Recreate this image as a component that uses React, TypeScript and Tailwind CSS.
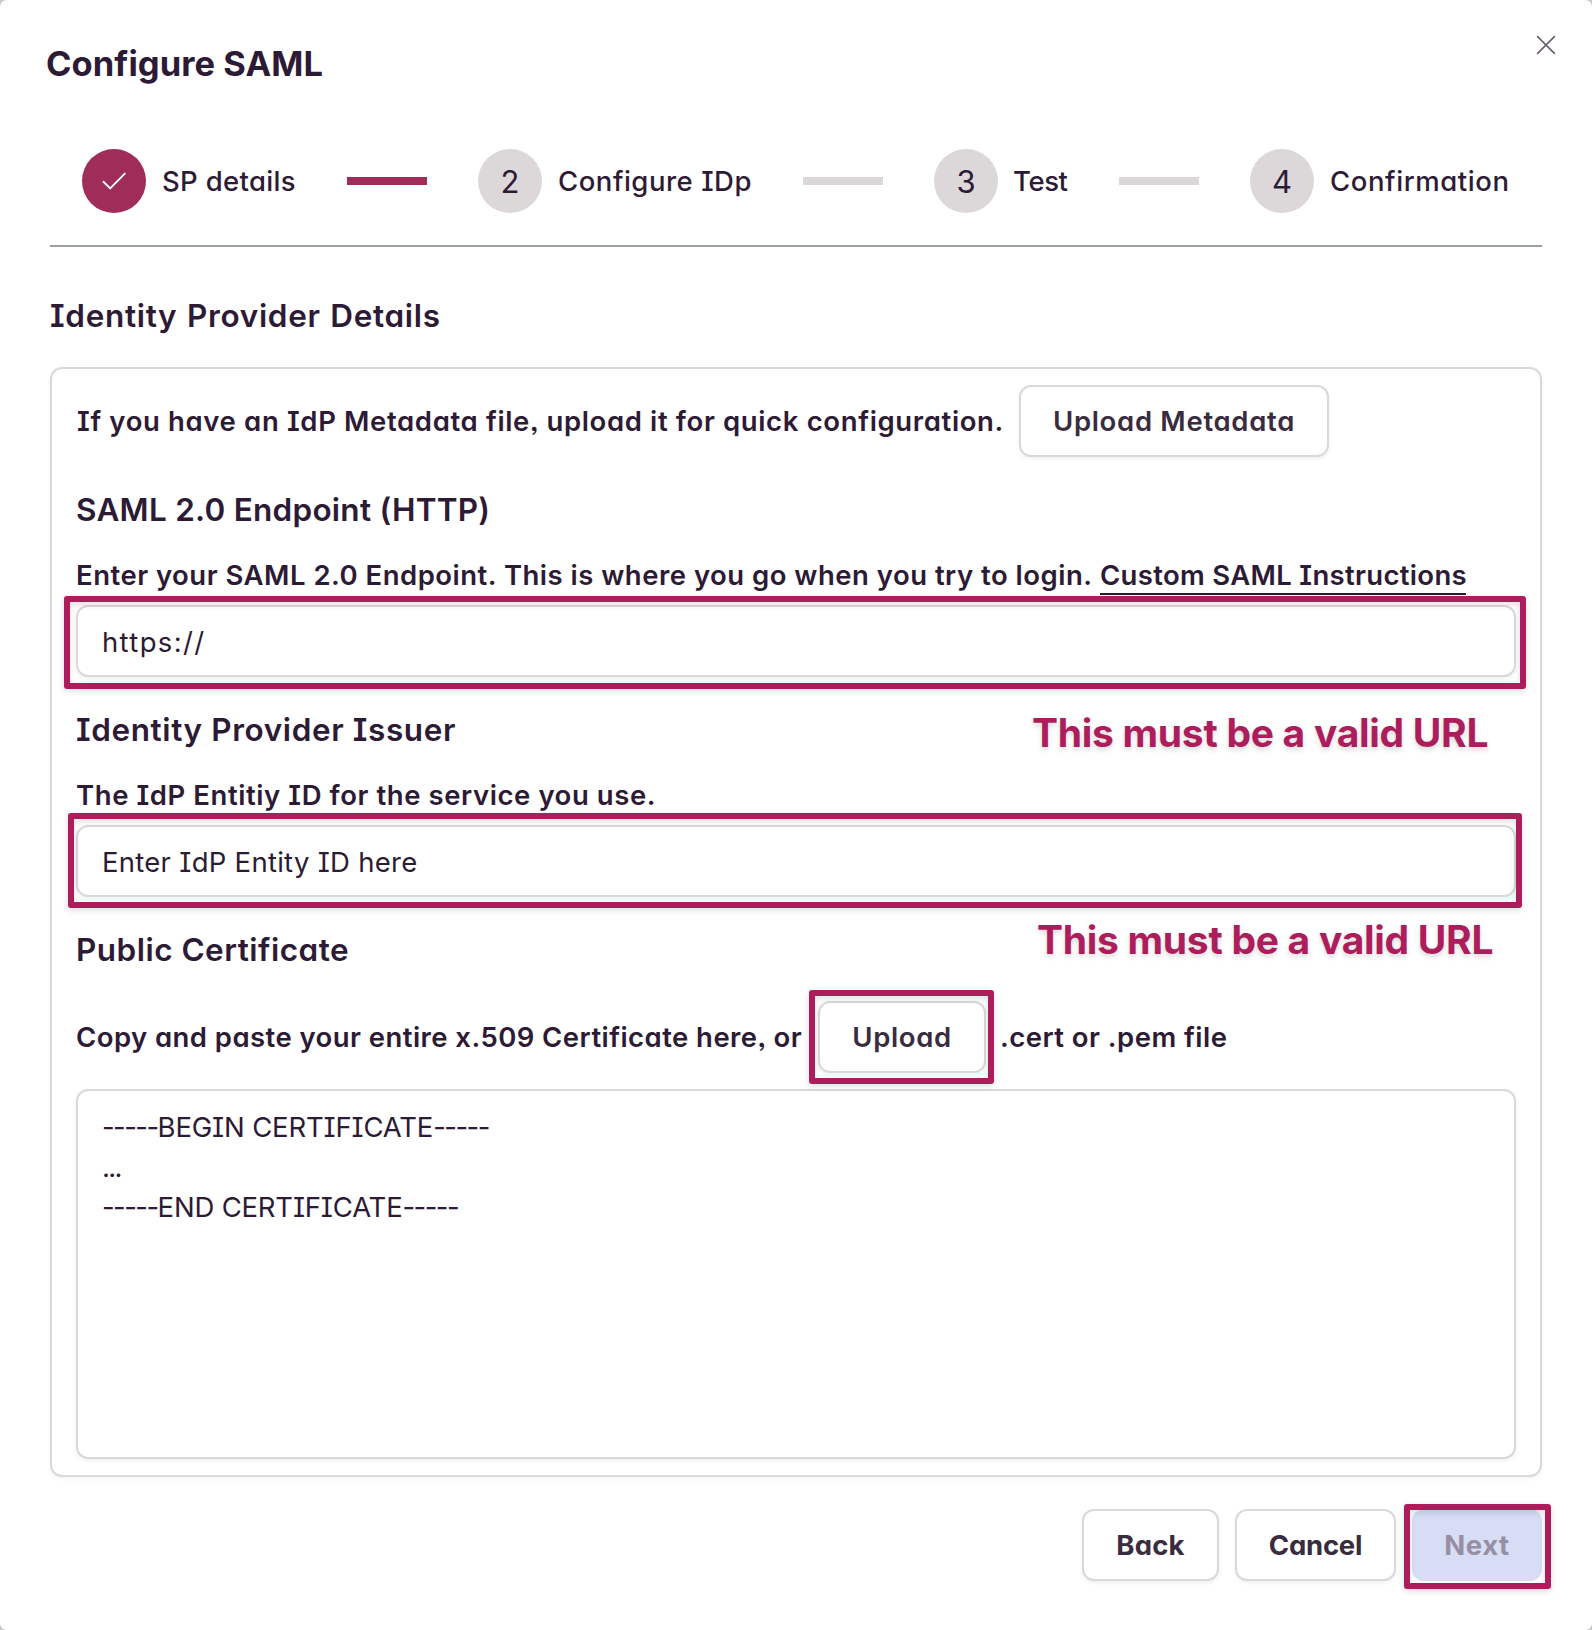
import type { ReactNode } from "react";

const button =
  "flex h-[72px] shrink-0 items-center justify-center rounded-[12px] border-2 border-[#dcd8da] bg-white text-[27.5px] text-[#3a2c3f] shadow-[0_2px_4px_rgba(0,0,0,0.06)]";

const field =
  "flex h-[72px] items-center rounded-[12px] border-2 border-[#dcd8da] px-6 pt-0.5 font-normal shadow-[0_2px_4px_rgba(0,0,0,0.06)]";

function Step({ mark, label, done = false }: { mark: ReactNode; label: ReactNode; done?: boolean }) {
  return (
    <div className="flex shrink-0 items-center">
      <div
        className={
          done
            ? "flex size-16 items-center justify-center rounded-full bg-[#a02c5a] text-white"
            : "flex size-16 items-center justify-center rounded-full bg-[#dcd8da] text-[31px] leading-none"
        }
      >
        {mark}
      </div>
      {label}
    </div>
  );
}

function Connector({ active = false }: { active?: boolean }) {
  return <div className={active ? "h-2 w-20 shrink-0 bg-[#a02c5a]" : "h-2 w-20 shrink-0 bg-[#dcd8da]"} />;
}

function Highlight({ className }: { className: string }) {
  return (
    <div
      className={`pointer-events-none absolute rounded-[3px] border-[6px] border-[#ae1d5b] shadow-[0_2px_6px_rgba(0,0,0,0.14),inset_0_3px_6px_rgba(0,0,0,0.12)] ${className}`}
    />
  );
}

function Note({ className }: { className: string }) {
  return (
    <div
      className={`absolute text-[39px] leading-[48px] font-bold tracking-[-0.28px] whitespace-nowrap text-[#ae1d5b] [font-feature-settings:normal] [text-shadow:0_3px_5px_rgba(0,0,0,0.15)] ${className}`}
    >
      This must be a valid URL
    </div>
  );
}

export default function App() {
  return (
    <div className="bg-[#cbcbcb]">
      <div className="h-[1630px] w-[1592px] overflow-hidden rounded-[7px] bg-white font-['Inter',sans-serif] whitespace-nowrap text-[#2d1b36] [font-feature-settings:'cv11','cv08','ss03']">
        <header className="flex items-start justify-between pr-[36px] pl-[46px]">
          <h1 className="mt-[39px] text-[34.5px] leading-[50px] font-bold tracking-[0.06px]">Configure SAML</h1>
          <button aria-label="Close" className="mt-[35px] text-[#6c6072]">
            <svg width="20" height="20" viewBox="0 0 20 20" fill="none" stroke="currentColor" strokeWidth="1.7" strokeLinecap="round">
              <path d="M1.6 1.6 18.4 18.4M18.4 1.6 1.6 18.4" />
            </svg>
          </button>
        </header>

        <main className="mx-[50px]">
          <div className="mt-[60px] flex h-[98px] items-start border-b-2 border-[#9ca0ae] pl-8">
            <div className="flex h-16 items-center text-[27.5px] leading-10 font-medium">
              <Step
                done
                mark={
                  <svg width="26" height="20" viewBox="0 0 26 20" fill="none" stroke="currentColor" strokeWidth="1.9" strokeLinecap="round" strokeLinejoin="round">
                    <path d="M2.4 10.8 9.2 17.4 23.8 2.6" />
                  </svg>
                }
                label={<span className="ml-4 w-[185px] tracking-[0.32px]">SP details</span>}
              />
              <Connector active />
              <div className="w-[51px]" />
              <Step mark={<span className="font-normal">2</span>} label={<span className="ml-4 w-[245px] tracking-[0.52px]">Configure IDp</span>} />
              <Connector />
              <div className="w-[51px]" />
              <Step mark={<span className="font-normal">3</span>} label={<span className="ml-[15px] w-[106px] tracking-[-0.4px]">Test</span>} />
              <Connector />
              <div className="w-[51px]" />
              <Step mark={<span className="font-normal">4</span>} label={<span className="ml-4 tracking-[0.58px]">Confirmation</span>} />
            </div>
          </div>

          <h2 className="mt-[49px] text-[31.5px] leading-10 font-semibold tracking-[0.68px] [word-spacing:1px]">Identity Provider Details</h2>

          <section className="mt-[31px] h-[1110px] rounded-[12px] border-2 border-[#dcd8da] px-6 pt-4 text-[27.5px] leading-10 font-semibold shadow-[0_2px_4px_rgba(0,0,0,0.05)]">
            <div className="flex items-center">
              <p className="w-[943px] pl-px tracking-[0.64px]">If you have an IdP Metadata file, upload it for quick configuration.</p>
              <button className={`${button} w-[310px] tracking-[0.69px]`}>Upload Metadata</button>
            </div>

            <h3 className="mt-[33px] text-[31.5px] tracking-[0.26px]">SAML 2.0 Endpoint (HTTP)</h3>
            <p className="mt-[25px] flex">
              <span className="w-[1024px] tracking-[0.49px]">Enter your SAML 2.0 Endpoint. This is where you go when you try to login.</span>
              <a className="h-10 w-[366px] border-b-2 border-[#2d1b36] tracking-[0.32px]">Custom SAML Instructions</a>
            </p>
            <div className="relative mt-[10px]">
              <div className={`${field} tracking-[1.35px]`}>https://</div>
              <Highlight className="-top-[9px] -left-[12px] h-[93px] w-[1462px]" />
            </div>

            <div className="relative mt-[33px]">
              <h3 className="text-[31.5px] tracking-[0.6px]">Identity Provider Issuer</h3>
              <Note className="-top-px left-[956px]" />
            </div>
            <p className="mt-[25px] tracking-[0.57px]">The IdP Entitiy ID for the service you use.</p>
            <div className="relative mt-[10px]">
              <div className={`${field} tracking-[0.27px]`}>Enter IdP Entity ID here</div>
              <Highlight className="-top-[12px] -left-[8px] h-[95px] w-[1454px]" />
            </div>

            <div className="relative mt-[33px]">
              <h3 className="text-[31.5px] tracking-[0.48px]">Public Certificate</h3>
              <Note className="-top-[14px] left-[961px]" />
            </div>
            <div className="mt-[31px] flex items-center">
              <p className="w-[742px] tracking-[0.44px]">Copy and paste your entire x.509 Certificate here, or</p>
              <div className="relative">
                <button className={`${button} w-[168px] tracking-[0.64px]`}>Upload</button>
                <Highlight className="-top-[11px] -left-[9px] h-[94px] w-[185px]" />
              </div>
              <p className="ml-[14px] tracking-[0.46px]">.cert or .pem file</p>
            </div>

            <div className="mt-4 h-[370px] rounded-[12px] border-2 border-[#dcd8da] px-6 pt-4 font-normal shadow-[0_2px_4px_rgba(0,0,0,0.06)]">
              <p>
                <span className="tracking-[-1.53px]">-----</span>
                <span className="tracking-[-0.18px]">BEGIN CERTIFICATE</span>
                <span className="tracking-[-1.53px]">-----</span>
              </p>
              <p className="tracking-[-1.7px]">...</p>
              <p>
                <span className="tracking-[-1.53px]">-----</span>
                <span className="tracking-[-0.2px]">END CERTIFICATE</span>
                <span className="tracking-[-1.53px]">-----</span>
              </p>
            </div>
          </section>

          <footer className="mt-8 flex justify-end gap-4">
            <button className={`${button} w-[137px] pt-0.5 font-bold tracking-[0.2px]`}>Back</button>
            <button className={`${button} w-[161px] pt-0.5 font-bold tracking-[-0.25px]`}>Cancel</button>
            <div className="relative">
              <button className="flex h-[72px] w-[130px] items-center justify-center rounded-[12px] bg-[#d6ddf5] pt-0.5 text-[27.5px] font-bold tracking-[0.6px] text-[#978fa1]">
                Next
              </button>
              <Highlight className="-top-[5px] -left-[8px] h-[85px] w-[147px]" />
            </div>
          </footer>
        </main>
      </div>
    </div>
  );
}
